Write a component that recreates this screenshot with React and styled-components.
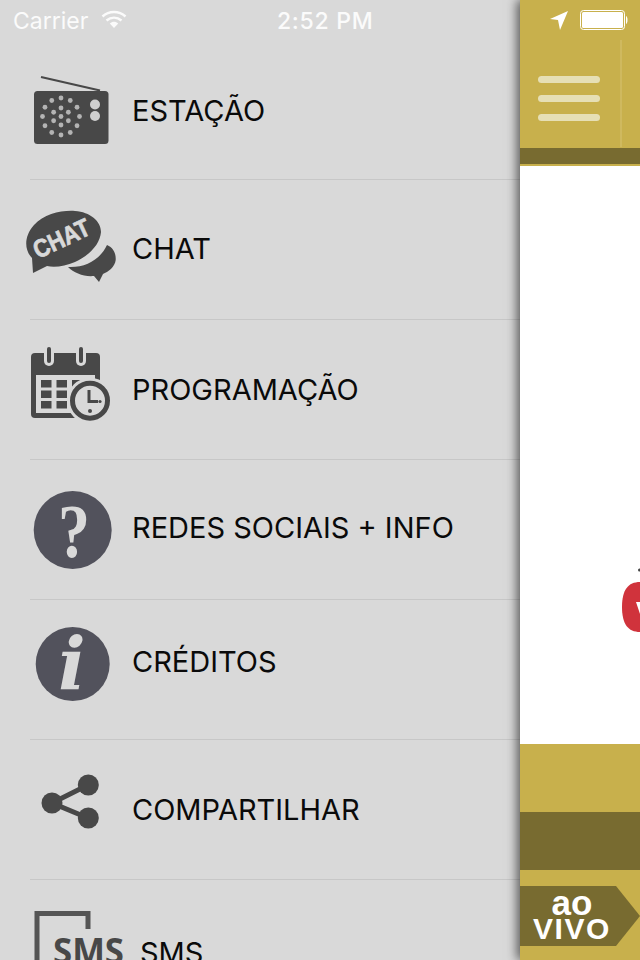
import React from 'react';
import styled, { createGlobalStyle } from 'styled-components';

const Global = createGlobalStyle`
  html, body { margin: 0; padding: 0; width: 640px; height: 960px; overflow: hidden; background: #d9d9d9; }
  #root { width: 640px; height: 960px; }
`;

const Screen = styled.div`
  display: flex;
  width: 640px;
  height: 960px;
  overflow: hidden;
  font-family: Inter, "Liberation Sans", sans-serif;
`;

const Menu = styled.nav`
  width: 520px;
  flex: none;
  background: #d9d9d9;
  display: flex;
  flex-direction: column;
`;

const StatusBar = styled.div`
  height: 40px;
  flex: none;
  display: flex;
  align-items: center;
  padding-left: 13px;
  color: #fbfbfb;
  font-size: 23px;
  font-weight: 400;
`;

const Carrier = styled.span`
  width: 88px;
  margin-top: 2px;
`;

const Clock = styled.span`
  margin-left: 150px;
  margin-top: 2px;
  font-weight: 500;
  letter-spacing: 0.7px;
`;

const Row = styled.div`
  height: 140px;
  flex: none;
  box-sizing: border-box;
  margin-left: 30px;
  display: flex;
  align-items: center;
  border-bottom: ${p => (p.$last ? 'none' : '1px solid #c7c7c7')};
`;

const IconSlot = styled.svg`
  width: 102px;
  height: 139px;
  flex: none;
  overflow: visible;
`;

const Label = styled.span`
  font-family: Inter, Roboto, "Liberation Sans", sans-serif;
  font-size: 29px;
  color: #0a0a0a;
  white-space: nowrap;
  margin-top: ${p => p.$top || 0}px;
  margin-left: ${p => p.$left || 0}px;
`;

const Side = styled.div`
  position: relative;
  width: 120px;
  flex: none;
  display: flex;
  flex-direction: column;
  background: #c8b04c;
  box-shadow: -3px 0 10px rgba(0, 0, 0, 0.6);
`;

const SideStatus = styled.div`
  height: 40px;
  flex: none;
  display: flex;
  align-items: center;
  padding-left: 30px;
  gap: 12px;
`;

const Bar = styled.div`
  height: 108px;
  flex: none;
  display: flex;
  align-items: flex-start;
  padding-left: 18px;
`;

const Burger = styled.div`
  width: 62px;
  padding-top: 36px;
  display: flex;
  flex-direction: column;
  gap: 12px;
`;

const BurgerLine = styled.span`
  height: 7px;
  border-radius: 4px;
  background: #e6dfb5;
`;

const BarDivider = styled.span`
  width: 2px;
  height: 107px;
  margin-left: 20px;
  background: #cfb95f;
`;

const DarkStrip = styled.div`
  flex: none;
  height: ${p => p.$h}px;
  background: #786b30;
`;

const GoldStrip = styled.div`
  flex: none;
  height: ${p => p.$h}px;
  background: #c8b04c;
`;

const Content = styled.div`
  position: relative;
  height: 578px;
  flex: none;
  background: #fff;
  overflow: hidden;
`;

const LogoPeek = styled.svg`
  position: absolute;
  right: 0;
  top: 402px;
  width: 18px;
  height: 70px;
`;

const Footer = styled.div`
  flex: 1;
  padding-top: 16px;
  background: #c8b04c;
`;

const LiveTag = styled.div`
  width: 120px;
  height: 60px;
  background: #786b30;
  clip-path: polygon(0 0, 96px 0, 120px 30px, 96px 60px, 0 60px);
  color: #fff;
  font-family: "Liberation Sans", Arial, sans-serif;
  font-weight: 700;
  text-align: center;
  display: flex;
  flex-direction: column;
  align-items: center;
  padding-right: 16px;
  box-sizing: border-box;
`;

const LiveTop = styled.span`
  font-size: 35px;
  line-height: 24px;
  margin-top: 5px;
`;

const LiveBottom = styled.span`
  font-size: 30px;
  line-height: 24px;
  margin-top: 2px;
  letter-spacing: 1.6px;
`;

const Glyph = styled.text`
  font-family: ${p => p.$font || '"Liberation Sans", sans-serif'};
  font-weight: 700;
  font-style: ${p => (p.$italic ? 'italic' : 'normal')};
  fill: ${p => p.$fill || '#d9d9d9'};
`;

const DARK = '#484848';
const SLATE = '#52525c';

const speakerDots = [
  [0, 0],
  ...Array.from({ length: 6 }, (_, i) => [8.5, i * 60 + 30]),
  ...Array.from({ length: 12 }, (_, i) => [18.5, i * 30]),
].map(([r, a]) => [
  61 + r * Math.cos((a * Math.PI) / 180),
  76.5 + r * Math.sin((a * Math.PI) / 180),
]);

const vb = '30 0 102 139';

const RadioIcon = () => (
  <IconSlot viewBox={vb}>
    <path d="M41 37 L100 50.5" stroke={DARK} strokeWidth="2.2" fill="none" />
    <rect x="34" y="51" width="74.5" height="53" rx="3.5" fill={DARK} />
    {speakerDots.map(([x, y], i) => (
      <circle key={i} cx={x} cy={y} r="2.4" fill="#b4b4b4" />
    ))}
    <circle cx="95" cy="64.5" r="5" fill="#cfcfcf" />
    <circle cx="95" cy="76" r="5" fill="#cfcfcf" />
  </IconSlot>
);

const ChatIcon = () => (
  <IconSlot viewBox={vb}>
    <path d="M68 87 C85 88 100 80 107 65 C114 68 116 74 115.7 80 C115 87 108 92 103 94 L99 102 L94 96 C84 97 74 93 68 87 Z" fill={DARK} />
    <path d="M33 93 L32 78 C24 70 24 56 34 45 C44 34 62 30 75 31 C90 32 101 41 101 52 C100 64 90 75 75 82 C65 86 55 88 47 86 Z" fill={DARK} />
    <Glyph x="0" y="0" fontSize="25" stroke="#d9d9d9" strokeWidth="0.7" transform="translate(38 79) rotate(-25)" textLength="60" lengthAdjust="spacingAndGlyphs">CHAT</Glyph>
  </IconSlot>
);

const CalendarIcon = () => (
  <IconSlot viewBox={vb}>
    <path d="M35 33 H96 a4 4 0 0 1 4 4 V94 a4 4 0 0 1 -4 4 H35 a4 4 0 0 1 -4 -4 V37 a4 4 0 0 1 4 -4 Z" fill={DARK} />
    <rect x="44" y="26" width="10" height="20" rx="5" fill="#d9d9d9" />
    <rect x="76" y="26" width="10" height="20" rx="5" fill="#d9d9d9" />
    <rect x="47" y="27" width="4" height="16" rx="2" fill={DARK} />
    <rect x="79" y="27" width="4" height="16" rx="2" fill={DARK} />
    <rect x="36" y="55" width="59" height="38" fill="#d9d9d9" />
    {[0, 1, 2].map(r =>
      [0, 1, 2, 3].map(c => (
        <rect key={`${r}-${c}`} x={41 + c * 15.5} y={60 + r * 10.5} width="10.5" height="7.5" fill={DARK} />
      ))
    )}
    <circle cx="90" cy="80.7" r="23" fill="#d9d9d9" />
    <circle cx="90" cy="80.7" r="17.5" fill="none" stroke={DARK} strokeWidth="5" />
    <path d="M89 70 V81.5 H98" fill="none" stroke={DARK} strokeWidth="3" />
    <circle cx="90" cy="91" r="2" fill={DARK} />
    <circle cx="100" cy="81.5" r="1.6" fill={DARK} />
  </IconSlot>
);

const HelpIcon = () => (
  <IconSlot viewBox={vb}>
    <circle cx="72.7" cy="70" r="39" fill={SLATE} />
    <Glyph x="58" y="97" fontSize="76" textLength="32" lengthAdjust="spacingAndGlyphs" $font='"Liberation Serif", serif'>?</Glyph>
  </IconSlot>
);

const InfoIcon = () => (
  <IconSlot viewBox={vb}>
    <circle cx="72.7" cy="64" r="37" fill={SLATE} />
    <Glyph x="72" y="90" fontSize="72" textAnchor="middle" $font='"DejaVu Serif", serif' $italic>i</Glyph>
  </IconSlot>
);

const ShareIcon = () => (
  <IconSlot viewBox={vb}>
    <path d="M88 45 L52 63 L88 78" fill="none" stroke={DARK} strokeWidth="5" />
    <circle cx="52" cy="63" r="10.5" fill={DARK} />
    <circle cx="88.3" cy="45" r="10.5" fill={DARK} />
    <circle cx="88.3" cy="78" r="10.5" fill={DARK} />
  </IconSlot>
);

const SmsIcon = () => (
  <IconSlot viewBox={vb}>
    <path d="M37 90 V32.5 H88 V48" fill="none" stroke="#555" strokeWidth="5" />
    <Glyph x="53" y="83" fontSize="36" textLength="71" lengthAdjust="spacingAndGlyphs" $font='"Open Sans", sans-serif' $fill="#484848">SMS</Glyph>
  </IconSlot>
);

const WifiIcon = () => (
  <svg width="26" height="20" viewBox="0 0 26 20">
    <path d="M1.5 6.5 C8 0.5 18 0.5 24.5 6.5" fill="none" stroke="#fbfbfb" strokeWidth="2.4" />
    <path d="M5.5 10.5 C10 6.6 16 6.6 20.5 10.5" fill="none" stroke="#fbfbfb" strokeWidth="2.4" />
    <path d="M8.8 13.4 C11.5 11.2 14.5 11.2 17.2 13.4 L13 18 Z" fill="#fbfbfb" />
  </svg>
);

const items = [
  { text: 'ESTAÇÃO', Icon: RadioIcon, top: 1 },
  { text: 'CHAT', Icon: ChatIcon, top: -3 },
  { text: 'PROGRAMAÇÃO', Icon: CalendarIcon, top: -1 },
  { text: 'REDES SOCIAIS + INFO', Icon: HelpIcon, top: -5 },
  { text: 'CRÉDITOS', Icon: InfoIcon, top: -17 },
  { text: 'COMPARTILHAR', Icon: ShareIcon, top: -1 },
  { text: 'SMS', Icon: SmsIcon, top: 5, left: 8, last: true },
];

export default function App() {
  return (
    <Screen>
      <Global />
      <Menu>
        <StatusBar>
          <Carrier>Carrier</Carrier>
          <WifiIcon />
          <Clock>2:52 PM</Clock>
        </StatusBar>
        {items.map(({ text, Icon, top, left, last }) => (
          <Row key={text} $last={last}>
            <Icon />
            <Label $top={top} $left={left}>{text}</Label>
          </Row>
        ))}
      </Menu>
      <Side>
        <SideStatus>
          <svg width="18" height="19" viewBox="0 0 18 19">
            <path d="M18 0 L0 8 L8 9 L10 19 Z" fill="#fff" />
          </svg>
          <svg width="48" height="20" viewBox="0 0 48 20">
            <rect x="0.5" y="0.5" width="44" height="19" rx="3" fill="none" stroke="#fff" />
            <rect x="2" y="2" width="41" height="16" rx="1.5" fill="#fff" />
            <path d="M46 6 C48 6.5 48 13.5 46 14 Z" fill="#fff" />
          </svg>
        </SideStatus>
        <Bar>
          <Burger>
            <BurgerLine />
            <BurgerLine />
            <BurgerLine />
          </Burger>
          <BarDivider />
        </Bar>
        <DarkStrip $h={16} />
        <GoldStrip $h={2} />
        <Content>
          <LogoPeek viewBox="0 0 18 70">
            <circle cx="17.5" cy="2" r="1.5" fill="#444" />
            <path d="M18 14 C6 14 0 22 0 39 C0 56 6 64 18 64 Z" fill="#d0333c" />
            <path d="M14 34 L18 34 L18 46 Z" fill="#fff" />
          </LogoPeek>
        </Content>
        <GoldStrip $h={68} />
        <DarkStrip $h={58} />
        <Footer>
          <LiveTag>
            <LiveTop>ao</LiveTop>
            <LiveBottom>VIVO</LiveBottom>
          </LiveTag>
        </Footer>
      </Side>
    </Screen>
  );
}
